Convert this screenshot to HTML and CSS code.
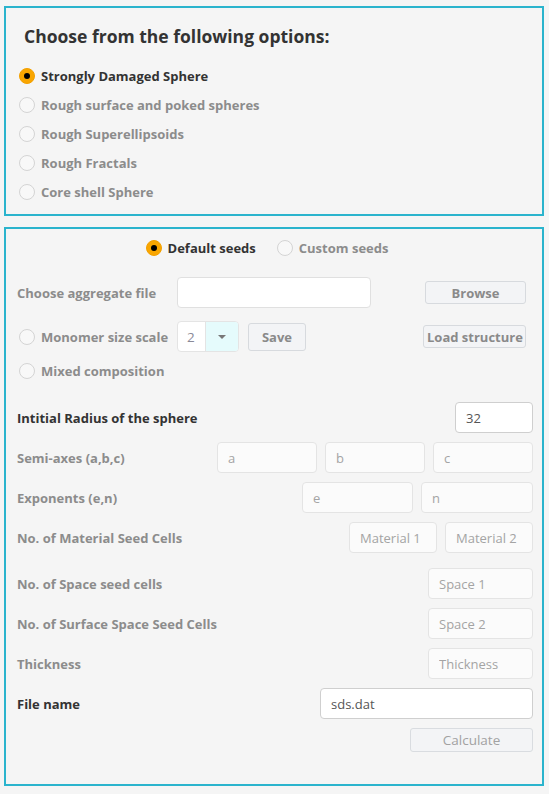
FILE: index.html
```html
<!DOCTYPE html>
<html>
<head>
<meta charset="utf-8">
<title>Options</title>
<link rel="stylesheet" href="styles.css">
</head>
<body>
<div class="page">
  <section class="panel panel-options">
    <h2 class="title">Choose from the following options:</h2>
    <ul class="options">
      <li class="option"><span class="radio checked"></span><span class="label label-active">Strongly Damaged Sphere</span></li>
      <li class="option"><span class="radio"></span><span class="label">Rough surface and poked spheres</span></li>
      <li class="option"><span class="radio"></span><span class="label">Rough Superellipsoids</span></li>
      <li class="option"><span class="radio"></span><span class="label">Rough Fractals</span></li>
      <li class="option"><span class="radio"></span><span class="label">Core shell Sphere</span></li>
    </ul>
  </section>

  <section class="panel panel-form">
    <div class="seeds">
      <span class="radio checked"></span><span class="label label-active">Default seeds</span>
      <span class="radio radio-second"></span><span class="label">Custom seeds</span>
    </div>

    <div class="row row-agg">
      <span class="label label-agg">Choose aggregate file</span>
      <input class="field field-light field-agg" type="text">
      <button class="btn btn-browse" type="button">Browse</button>
    </div>

    <div class="row row-mono">
      <span class="radio radio-inline"></span><span class="label label-mono">Monomer size scale</span>
      <div class="select"><span class="select-value">2</span><span class="select-arrow"><span class="caret"></span></span></div>
      <button class="btn btn-save" type="button">Save</button>
      <button class="btn btn-load" type="button">Load structure</button>
    </div>

    <div class="row-mixed">
      <span class="radio radio-inline"></span><span class="label">Mixed composition</span>
    </div>

    <div class="row row-radius">
      <span class="label label-active">Intitial Radius of the sphere</span>
      <div class="fields"><input class="field field-white w-radius" type="text" value="32"></div>
    </div>

    <div class="row row-next">
      <span class="label">Semi-axes (a,b,c)</span>
      <div class="fields">
        <input class="field w-axis" type="text" placeholder="a" disabled>
        <input class="field w-axis" type="text" placeholder="b" disabled>
        <input class="field w-axis" type="text" placeholder="c" disabled>
      </div>
    </div>

    <div class="row row-next">
      <span class="label">Exponents (e,n)</span>
      <div class="fields">
        <input class="field w-exp" type="text" placeholder="e" disabled>
        <input class="field w-exp2" type="text" placeholder="n" disabled>
      </div>
    </div>

    <div class="row row-next">
      <span class="label">No. of Material Seed Cells</span>
      <div class="fields">
        <input class="field w-mat" type="text" placeholder="Material 1" disabled>
        <input class="field w-mat" type="text" placeholder="Material 2" disabled>
      </div>
    </div>

    <div class="row row-space">
      <span class="label">No. of Space seed cells</span>
      <div class="fields"><input class="field w-space" type="text" placeholder="Space 1" disabled></div>
    </div>

    <div class="row row-next">
      <span class="label">No. of Surface Space Seed Cells</span>
      <div class="fields"><input class="field w-space" type="text" placeholder="Space 2" disabled></div>
    </div>

    <div class="row row-next">
      <span class="label">Thickness</span>
      <div class="fields"><input class="field w-space" type="text" placeholder="Thickness" disabled></div>
    </div>

    <div class="row row-next">
      <span class="label label-active">File name</span>
      <div class="fields"><input class="field field-white w-file" type="text" value="sds.dat"></div>
    </div>

    <div class="row-calc">
      <button class="btn btn-calc" type="button">Calculate</button>
    </div>
  </section>
</div>
</body>
</html>
```

FILE: styles.css
```css
html, body {
  margin: 0;
  padding: 0;
  background: #f5f5f5;
  font-family: "Open Sans", "DejaVu Sans", sans-serif;
}

.page {
  padding: 6px 5px 8px 4px;
  display: flex;
  flex-direction: column;
  gap: 11px;
}

.panel {
  border: 2px solid #2bb4cd;
  background: #f5f5f5;
  box-sizing: border-box;
}

/* ---------- options panel ---------- */
.panel-options {
  height: 210px;
}

.title {
  margin: 17px 0 0 18px;
  height: 22px;
  line-height: 22px;
  font-size: 17.5px;
  font-weight: 700;
  color: #333;
}

.options {
  list-style: none;
  margin: 14px 0 0 0;
  padding: 0 0 0 13px;
}

.option {
  height: 29px;
  display: flex;
  align-items: center;
  gap: 6px;
}

.label {
  font-size: 13px;
  font-weight: 700;
  color: #8c8c8c;
  white-space: nowrap;
}

.label-active {
  color: #333;
}

.radio {
  position: relative;
  flex: none;
  width: 16px;
  height: 16px;
  box-sizing: border-box;
  border-radius: 50%;
  border: 1px solid #d4d4d4;
  background: #f8f8f8;
}

.radio.checked {
  background: #f9a600;
  border-color: #f3a000;
}

.radio.checked::after {
  content: "";
  position: absolute;
  left: 4px;
  top: 4px;
  width: 6px;
  height: 6px;
  border-radius: 50%;
  background: #000;
}

/* ---------- form panel ---------- */
.panel-form {
  height: 559px;
  padding: 10px 9px 0 11px;
  display: flex;
  flex-direction: column;
}

.seeds {
  height: 18px;
  display: flex;
  align-items: center;
  justify-content: center;
  gap: 6px;
  padding-right: 16px;
}

.radio-second {
  margin-left: 15px;
}

.row {
  height: 31px;
  display: flex;
  align-items: center;
}

.row-agg { margin-top: 20px; }
.row-mono { margin-top: 13px; }
.row-radius { margin-top: 22px; }
.row-next { margin-top: 9px; }
.row-space { margin-top: 15px; }

.row-mixed {
  margin-top: 10px;
  height: 18px;
  display: flex;
  align-items: center;
}

.radio-inline {
  margin-left: 2px;
  margin-right: 6px;
}

.label-agg {
  width: 160px;
}

.label-mono {
  width: 130px;
}

.fields {
  margin-left: auto;
  display: flex;
  gap: 8px;
}

.field {
  box-sizing: border-box;
  height: 31px;
  margin: 0;
  padding: 0 10px;
  border: 1px solid #e4e4e4;
  border-radius: 4px;
  background: #fbfbfb;
  font-family: "Open Sans", "DejaVu Sans", sans-serif;
  font-size: 13px;
  color: #555;
  outline: none;
}

.field::placeholder {
  color: #a4a4a4;
}

.field-light {
  background: #fff;
  border-color: #e0e0e0;
}

.field-white {
  background: #fff;
  border-color: #cfcfcf;
}

.field-agg { width: 194px; }
.w-radius { width: 78px; }
.w-axis { width: 100px; }
.w-exp { width: 111px; }
.w-exp2 { width: 112px; }
.w-mat { width: 88px; }
.w-space { width: 105px; }
.w-file { width: 213px; }

.btn {
  box-sizing: border-box;
  margin: 0;
  padding: 0 3px;
  border: 1px solid #d7dade;
  border-radius: 3px;
  background: #f3f4f6;
  font-family: "Open Sans", "DejaVu Sans", sans-serif;
  font-size: 13px;
  font-weight: 700;
  color: #8a8a8a;
  white-space: nowrap;
}

.btn-browse {
  margin-left: auto;
  margin-right: 7px;
  width: 101px;
  height: 23px;
}

.btn-save {
  margin-left: 9px;
  width: 58px;
  height: 28px;
}

.btn-load {
  margin-left: auto;
  margin-right: 7px;
  width: 103px;
  height: 23px;
}

.select {
  margin-left: 6px;
  box-sizing: border-box;
  width: 62px;
  height: 31px;
  border: 1px solid #e4e4e4;
  border-radius: 4px;
  display: flex;
  overflow: hidden;
  background: #fff;
}

.select-value {
  width: 28px;
  box-sizing: border-box;
  padding-left: 9px;
  border-right: 1px solid #e4e4e4;
  display: flex;
  align-items: center;
  font-size: 13.5px;
  color: #8a8a98;
}

.select-arrow {
  flex: 1;
  background: #e5fbfc;
  display: flex;
  align-items: center;
  justify-content: center;
}

.caret {
  width: 0;
  height: 0;
  border-left: 4px solid transparent;
  border-right: 4px solid transparent;
  border-top: 4px solid #777;
}

.row-calc {
  margin-top: 9px;
  display: flex;
  justify-content: flex-end;
}

.btn-calc {
  width: 123px;
  height: 24px;
  font-weight: 400;
  font-size: 13.5px;
  color: #a2a2a2;
  border-color: #d9dce0;
}
```
